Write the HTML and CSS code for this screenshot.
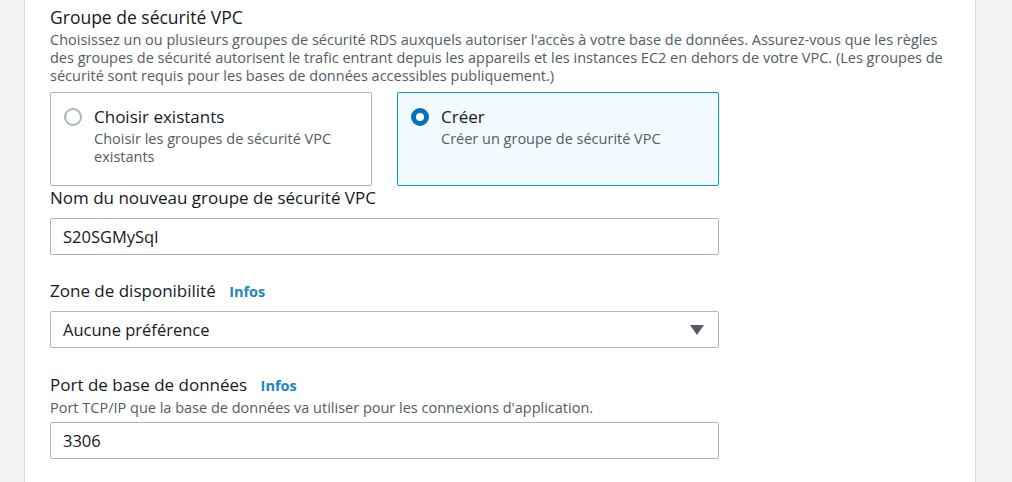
FILE: index.html
```html
<!DOCTYPE html>
<html lang="fr">
<head>
<meta charset="utf-8">
<link rel="stylesheet" href="styles.css">
</head>
<body>
<div class="page">
  <div class="panel">
    <div class="field first">
      <div class="label title">Groupe de sécurité VPC</div>
      <div class="desc wrap">Choisissez un ou plusieurs groupes de sécurité RDS auxquels autoriser l'accès à votre base de données. Assurez-vous que les règles des groupes de sécurité autorisent le trafic entrant depuis les appareils et les instances EC2 en dehors de votre VPC. (Les groupes de sécurité sont requis pour les bases de données accessibles publiquement.)</div>
      <div class="tiles">
        <div class="tile">
          <span class="radio"></span>
          <div class="tile-text">
            <div class="tile-title">Choisir existants</div>
            <div class="tile-desc">Choisir les groupes de sécurité VPC existants</div>
          </div>
        </div>
        <div class="tile selected">
          <span class="radio on"></span>
          <div class="tile-text">
            <div class="tile-title">Créer</div>
            <div class="tile-desc">Créer un groupe de sécurité VPC</div>
          </div>
        </div>
      </div>
    </div>
    <div class="field name">
      <div class="label">Nom du nouveau groupe de sécurité VPC</div>
      <div class="input">S20SGMySql</div>
    </div>
    <div class="field zone">
      <div class="label">Zone de disponibilité <a class="info">Infos</a></div>
      <div class="input select">Aucune préférence
        <svg class="caret" width="14" height="10" viewBox="0 0 14 10"><path d="M0 0h14L7 10z" fill="#545b64"/></svg>
      </div>
    </div>
    <div class="field port">
      <div class="label">Port de base de données <a class="info">Infos</a></div>
      <div class="desc small">Port TCP/IP que la base de données va utiliser pour les connexions d'application.</div>
      <div class="input">3306</div>
    </div>
  </div>
</div>
</body>
</html>
```
FILE: styles.css
```css
* { box-sizing: border-box; }
html, body { margin: 0; padding: 0; }
body {
  background: #f2f3f3;
  font-family: "Open Sans", "Noto Sans", sans-serif;
  color: #16191f;
  height: 482px;
  overflow: hidden;
}
.page {
  padding-left: 24px;
  width: 976px;
}
.panel {
  background: #fff;
  border-left: 1px solid #d5dbdb;
  border-right: 1px solid #d5dbdb;
  height: 482px;
  padding: 6px 0 0 25px;
}
.field { width: 922px; }
.name { margin-top: 1px; }
.zone { margin-top: 25px; }
.port { margin-top: 26px; }
.label {
  font-size: 17px;
  line-height: 22px;
  color: #16191f;
}
.label.title { font-size: 17.5px; }
.info {
  color: #1a86c5;
  font-weight: bold;
  font-size: 14.5px;
  margin-left: 9px;
}
.desc {
  font-size: 14.5px;
  line-height: 18px;
  color: #545b64;
  margin-top: 3px;
}
.desc.wrap { width: 898px; }
.desc.small { margin-top: 2px; }
.tiles {
  display: flex;
  gap: 25px;
  margin-top: 7px;
}
.tile {
  width: 322px;
  height: 94px;
  border: 1px solid #aab7b8;
  border-radius: 2px;
  display: flex;
  align-items: flex-start;
  padding: 13px 12px;
  gap: 12px;
}
.tile.selected {
  background: #f1faff;
  border-color: #00a1c9;
}
.radio {
  width: 18px;
  height: 18px;
  border-radius: 50%;
  border: 2px solid #aab7b8;
  flex: none;
  margin-top: 2px;
  margin-left: 1px;
}
.radio.on {
  border: 5px solid #0073bb;
  background: #fff;
}
.tile-title {
  font-size: 17px;
  line-height: 22px;
}
.tile-desc {
  font-size: 14.5px;
  line-height: 18px;
  color: #545b64;
  margin-top: 2px;
}
.input {
  width: 669px;
  height: 37px;
  border: 1px solid #aab7b8;
  border-radius: 2px;
  margin-top: 9px;
  font-size: 16.5px;
  line-height: 35px;
  padding: 0 12px;
}
.zone .input { margin-top: 8px; }
.port .input { margin-top: 5px; }
.select { display: flex; justify-content: space-between; align-items: center; }
.caret { margin-right: 2px; }
```
